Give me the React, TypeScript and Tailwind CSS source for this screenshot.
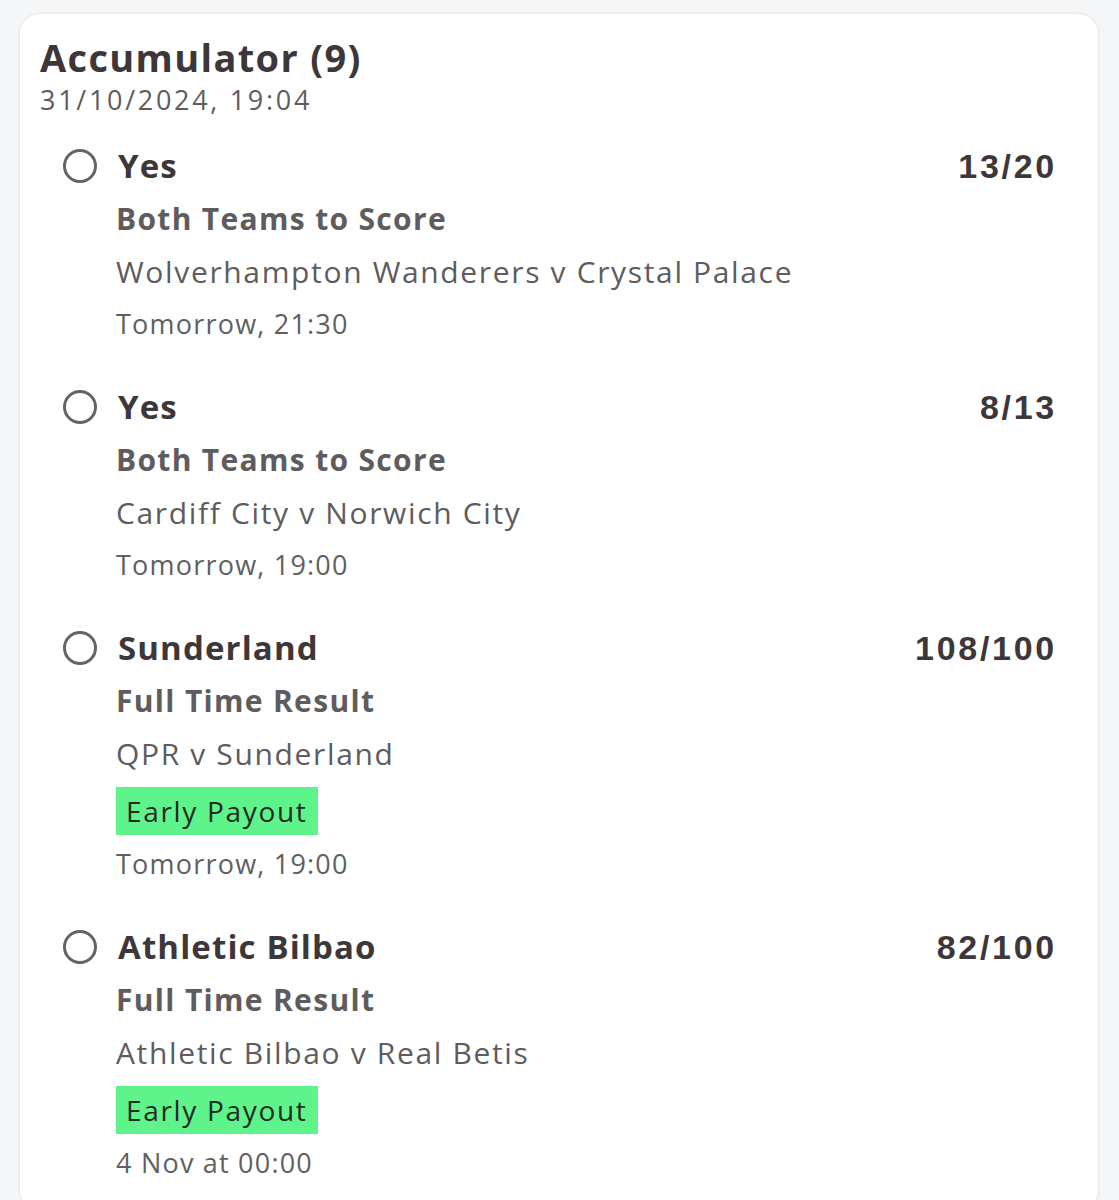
const legs = [
  {
    selection: "Yes",
    odds: "13/20",
    market: "Both Teams to Score",
    event: "Wolverhampton Wanderers v Crystal Palace",
    time: "Tomorrow, 21:30",
    earlyPayout: false,
  },
  {
    selection: "Yes",
    odds: "8/13",
    market: "Both Teams to Score",
    event: "Cardiff City v Norwich City",
    time: "Tomorrow, 19:00",
    earlyPayout: false,
  },
  {
    selection: "Sunderland",
    odds: "108/100",
    market: "Full Time Result",
    event: "QPR v Sunderland",
    time: "Tomorrow, 19:00",
    earlyPayout: true,
  },
  {
    selection: "Athletic Bilbao",
    odds: "82/100",
    market: "Full Time Result",
    event: "Athletic Bilbao v Real Betis",
    time: "4 Nov at 00:00",
    earlyPayout: true,
  },
];

type Leg = (typeof legs)[number];

function LegRow({ leg }: { leg: Leg }) {
  return (
    <div className="flex flex-col">
      <div className="flex items-center h-[53px]">
        <div className="w-[34px] h-[34px] rounded-full border-[3px] border-[#646464] ml-[23px] mr-[21px] shrink-0" />
        <span className="text-[33px] font-bold text-[#3e3739] leading-none tracking-[0.034em]">{leg.selection}</span>
        <span className="ml-auto -mr-[3px] text-[34px] font-bold text-[#3e3739] leading-none tracking-[0.08em] font-['Liberation_Sans',sans-serif]">
          {leg.odds}
        </span>
      </div>
      <div className="pl-[76px] flex flex-col">
        <div className="h-[53px] flex items-center text-[30px] font-bold text-[#5e5c5d] tracking-[0.044em]">
          {leg.market}
        </div>
        <div className="h-[53px] flex items-center text-[30px] text-[#5e5c5d] tracking-[0.055em]">{leg.event}</div>
        {leg.earlyPayout && (
          <div className="h-[58px] flex items-center">
            <span className="bg-[#5ef48b] text-[#1f2a23] text-[28px] leading-[48px] h-[48px] px-[10px] mt-[3px] tracking-[0.06em]">
              Early Payout
            </span>
          </div>
        )}
        <div className="h-[53px] flex items-center text-[27px] text-[#606060] tracking-[0.045em]">{leg.time}</div>
      </div>
    </div>
  );
}

export default function App() {
  return (
    <div className="min-h-[1200px] bg-[#f5f6f8] pt-[14px] px-[20px] font-['Open_Sans',sans-serif] overflow-hidden">
      <div className="bg-white w-[1078px] rounded-[20px] shadow-[0_0_3px_rgba(0,0,0,0.12)] pt-[20px] pl-[20px] pr-[44px] pb-[20px]">
        <div className="text-[38px] font-bold text-[#3e3739] leading-[46px] tracking-[0.035em]">Accumulator (9)</div>
        <div className="text-[27px] text-[#5e5c5d] leading-[40px] mb-[19px] tracking-[0.1em]">31/10/2024, 19:04</div>
        <div className="flex flex-col gap-[29px]">
          {legs.map((leg, i) => (
            <LegRow key={i} leg={leg} />
          ))}
        </div>
      </div>
    </div>
  );
}
